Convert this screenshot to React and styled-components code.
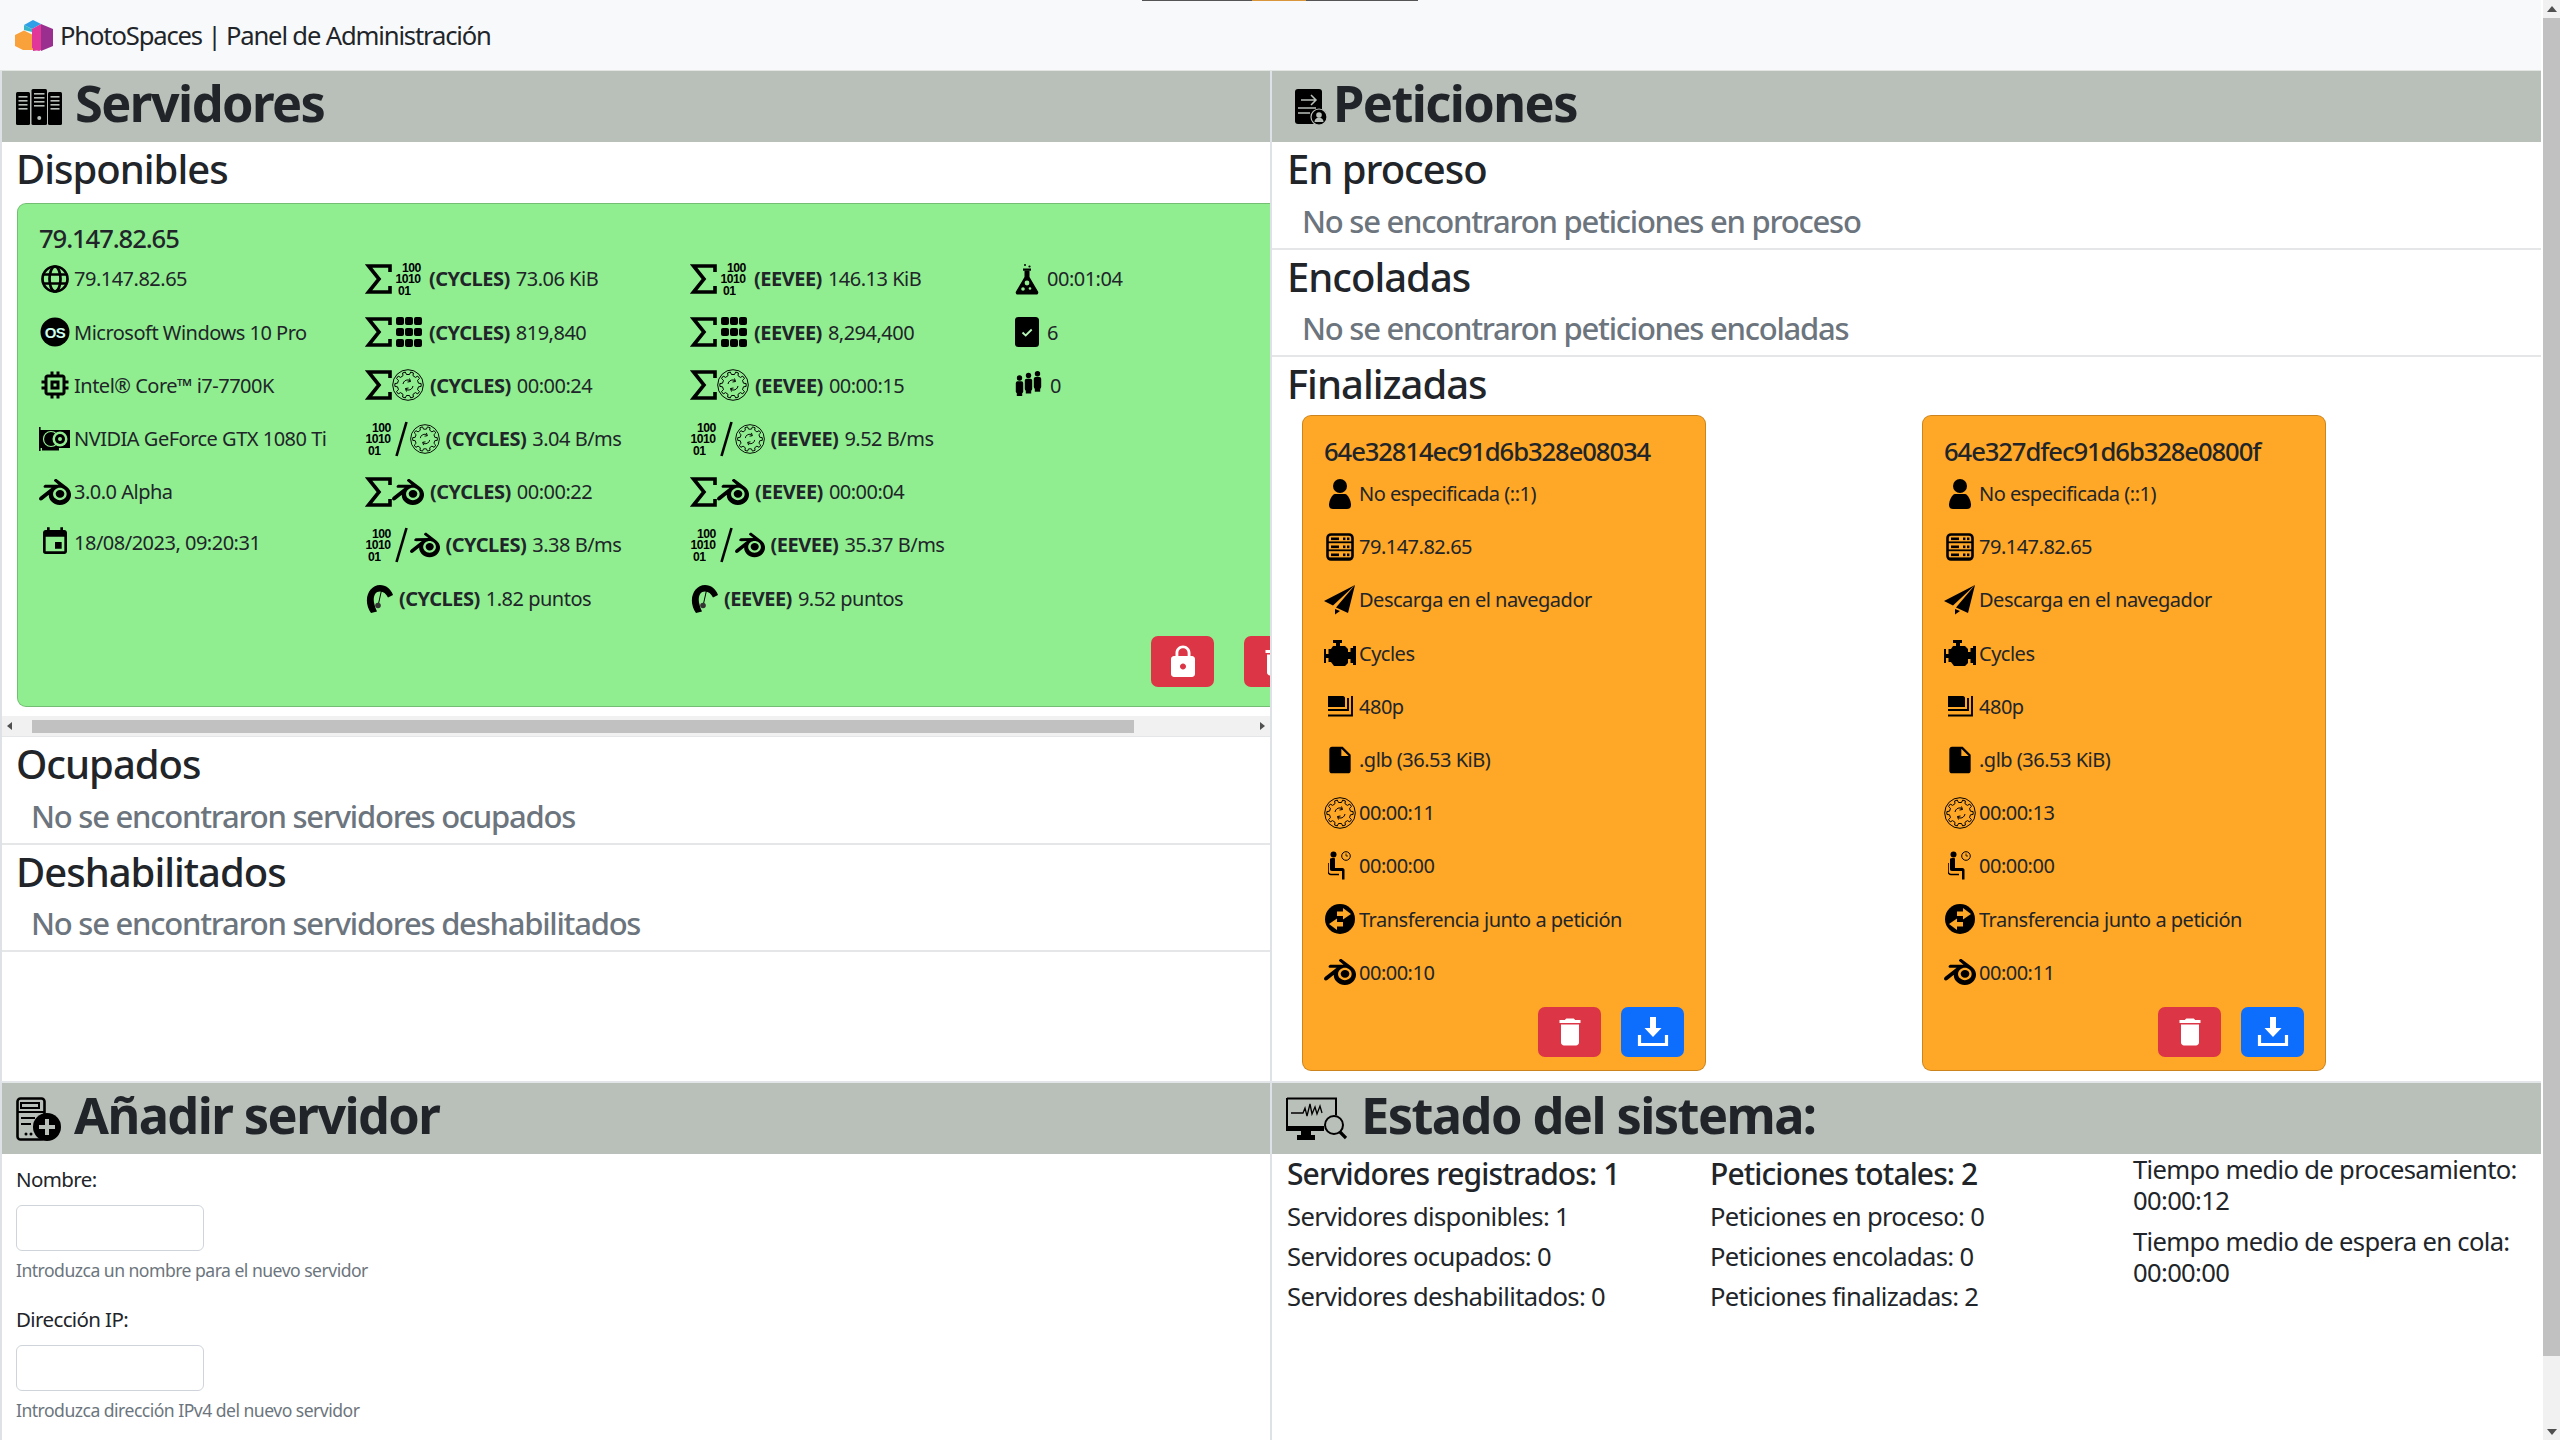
import React from "react";
import styled, { createGlobalStyle } from "styled-components";
import { SiBlender } from "react-icons/si";
import { MdMemory, MdEvent, MdInsertDriveFile, MdDelete, MdLock } from "react-icons/md";

const Global = createGlobalStyle`
  html, body { margin: 0; padding: 0; background: #fff; overflow: hidden; }
  * { box-sizing: border-box; }
  body { font-family: "Noto Sans", "Open Sans", sans-serif; color: #212529; }
`;

const Page = styled.div`display: flex; width: 2560px; height: 1440px; overflow: hidden; position: relative;`;
const Main = styled.div`width: 2541px; display: flex; flex-direction: column; flex: none;`;
const Navbar = styled.header`height: 70px; flex: none; background: #f8f9fa; display: flex; align-items: center; padding-left: 15px; gap: 6px; font-size: 25.6px; letter-spacing: -0.045em;`;
const TopMark = styled.div`position: absolute; top: 0; left: 1142px; width: 276px; height: 1px; background: #555; &::after { content: ""; display: block; margin-left: 110px; width: 54px; height: 1px; background: #d9963a; }`;
const Grid = styled.div`display: grid; grid-template-columns: 1270px 1271px; grid-template-rows: 1010px 1fr; flex: 1; min-height: 0; border-top: 1px solid #e3e5e3;`;
const Cell = styled.section`min-width: 0; display: flex; flex-direction: column; border-left: 2px solid #dee2e6; ${p => p.$row2 && "border-top: 2px solid #e3e6e8;"}`;
const Band = styled.div`height: 71px; flex: none; background: #b9bfb9; display: flex; align-items: center; gap: ${p => p.$gap ?? 13}px; padding-left: ${p => p.$pad ?? 14}px;`;
const BandTitle = styled.h1`margin: 0; font-size: 50.5px; font-weight: 700; line-height: 1.2; letter-spacing: -0.031em; padding-bottom: 7px;`;
const SubTitle = styled.h3`margin: 0; height: ${p => p.$h ?? 56}px; flex: none; display: flex; align-items: center; padding: 0 0 2px ${p => p.$right ? 15 : 14}px; font-size: 40px; font-weight: 500; letter-spacing: -0.025em; line-height: 1.2;`;
const Empty = styled.p`margin: 0; height: 52px; flex: none; display: flex; align-items: center; padding: 0 0 4px ${p => p.$right ? 30 : 29}px; font-size: 31px; font-weight: 500; color: #6c757d; letter-spacing: -0.04em; border-bottom: 2px solid #e4e6e8;`;

const CardClip = styled.div`overflow: hidden; flex: none; padding: 5px 0 0 15px; height: 518px;`;
const ServerCard = styled.article`width: 1312px; height: 504px; background: #90ee90; border: 1px solid rgba(0,0,0,.2); border-radius: 9px; padding: 20px 0 0 21px; display: flex; flex-direction: column;`;
const CardTitle = styled.h5`margin: 0; height: ${p => p.$h ?? 28.4}px; flex: none; display: flex; align-items: center; font-size: 25.6px; font-weight: 500; letter-spacing: -0.042em;`;
const Columns = styled.div`display: grid; grid-template-columns: 326px 325px 325px 1fr; height: 372.4px; flex: none;`;
const Column = styled.div`display: flex; flex-direction: column;`;
const Row = styled.div`height: ${p => p.$h ?? 53.2}px; flex: none; display: flex; align-items: center; gap: 3px; font-size: 20px; letter-spacing: -0.025em; white-space: nowrap; & b { font-weight: 700; margin-right: 0.3em; }`;
const IconBox = styled.span`flex: none; display: inline-flex; align-items: center; justify-content: center; gap: ${p => p.$gap ?? 2}px; margin-right: ${p => p.$mr ?? 0}px; min-width: ${p => p.$w ?? 32}px; color: #000;`;
const Actions = styled.div`display: flex; justify-content: flex-end; gap: ${p => p.$gap ?? 30}px; padding-right: ${p => p.$pr ?? 21}px; margin-top: ${p => p.$mt ?? 10}px;`;
const ActionBtn = styled.button`width: 63px; height: ${p => p.$h ?? 51}px; border: 0; border-radius: 7px; padding: 0; background: ${p => p.$blue ? "#0d6efd" : "#dc3545"}; color: #fff; display: flex; align-items: center; justify-content: center; font-size: 36px;`;

const HBar = styled.div`height: 21px; flex: none; background: #f1f1f1; display: flex; align-items: center; border-bottom: 1px solid #e4e6e8;`;
const HArrow = styled.span`width: 16px; flex: none; display: flex; justify-content: center; &::before { content: ""; border: 4px solid transparent; ${p => p.$right ? "border-left: 5px solid #505050; margin-left: 5px;" : "border-right: 5px solid #505050; margin-right: 5px;"} }`;
const HTrack = styled.div`flex: 1; height: 13px; padding-left: 13.5px;`;
const HThumb = styled.div`height: 13px; background: #c1c1c1;`;

const CardsRow = styled.div`display: grid; grid-template-columns: repeat(2, 620px); padding: 1.5px 0 0 30px;`;
const ReqCard = styled.article`width: 404px; height: 656px; background: #ffa726; border: 1px solid rgba(0,0,0,.2); border-radius: 9px; padding: 21px 0 0 21px; display: flex; flex-direction: column;`;
const ReqRows = styled.div`height: 532px; flex: none; display: flex; flex-direction: column;`;

const Form = styled.div`display: flex; flex-direction: column; padding: 10.5px 0 0 14px;`;
const Label = styled.label`height: 28px; display: flex; align-items: center; font-size: 20.5px; letter-spacing: -0.03em;`;
const Input = styled.input`width: 188px; height: 46px; margin-top: 12px; border: 1px solid #ced4da; border-radius: 6px; background: #fff; display: block;`;
const Help = styled.small`display: flex; align-items: center; height: 24px; margin-top: 7px; font-size: 17.6px; color: #6c757d; letter-spacing: -0.03em;`;
const Field = styled.div`height: 140px; display: flex; flex-direction: column;`;

const Stats = styled.div`display: grid; grid-template-columns: 423px 423px 1fr; padding: 1px 0 0 15px;`;
const StatCol = styled.div`display: flex; flex-direction: column;`;
const StatHead = styled.div`height: 36px; display: flex; align-items: center; font-size: 30px; font-weight: 500; letter-spacing: -0.03em; margin-bottom: 5px; white-space: nowrap;`;
const StatLine = styled.div`height: 40.3px; display: flex; align-items: center; font-size: 25.6px; letter-spacing: -0.026em; white-space: nowrap;`;
const StatBlock = styled.div`font-size: 25.6px; line-height: 30.5px; letter-spacing: -0.026em; margin: ${p => p.$mt ?? 0}px 0 0; white-space: nowrap;`;

const VBar = styled.aside`width: 17px; margin-left: 2px; flex: none; background: #f1f1f1; display: flex; flex-direction: column; align-items: center;`;
const VArrow = styled.span`height: 18px; flex: none; display: flex; align-items: center; &::before { content: ""; border: 5px solid transparent; ${p => p.$down ? "border-top: 6px solid #505050; margin-top: 6px;" : "border-bottom: 6px solid #505050; margin-bottom: 6px;"} }`;
const VThumb = styled.div`width: 100%; height: 1338px; background: #c1c1c1; flex: none;`;
const VSpace = styled.div`flex: 1;`;

const Glyph = styled.svg`flex: none; display: block; color: #000;`;
const I = ({ w = 32, h = 32, vb, children }) => <Glyph width={w} height={h} viewBox={vb || `0 0 ${w} ${h}`}>{children}</Glyph>;

const gear = (() => {
  const n = 10, c = 16, out = 13.2, inn = 10.6; let d = "";
  for (let i = 0; i < n; i++) {
    const a = (i / n) * Math.PI * 2, s = Math.PI / n / 2;
    const pts = [[inn, a - s * 1.1], [out, a - s * .7], [out, a + s * .7], [inn, a + s * 1.1]];
    pts.forEach(([r, t], k) => { d += `${i === 0 && k === 0 ? "M" : "L"}${(c + r * Math.cos(t)).toFixed(2)} ${(c + r * Math.sin(t)).toFixed(2)}`; });
  }
  return d + "Z";
})();

const Globe = () => <I><g fill="none" stroke="#000" strokeWidth="2.7"><circle cx="16" cy="16" r="12.5" /><ellipse cx="16" cy="16" rx="5.5" ry="12.5" /><path d="M5 11.5h22M5 20.5h22" /></g></I>;
const Os = () => <I><circle cx="16" cy="16" r="14.5" fill="#000" /><text x="16" y="21.5" textAnchor="middle" fontFamily="Liberation Sans" fontWeight="700" fontSize="15" fill="#cfe">OS</text></I>;
const Gpu = () => <I w={32} h={28}><rect x="1" y="5" width="30" height="18" fill="#000" /><rect x="0" y="2" width="1.6" height="24" fill="#000" /><rect x="3" y="23" width="17" height="2.5" fill="#000" /><circle cx="12" cy="14" r="7.5" fill="none" stroke="#90ee90" strokeWidth="1.2" /><circle cx="21" cy="14" r="7.5" fill="#90ee90" /><circle cx="21" cy="14" r="5" fill="#000" /><circle cx="21" cy="14" r="2" fill="#90ee90" /></I>;
const Blend = ({ s = 32 }) => <SiBlender size={s} color="#000" style={{ flex: "none" }} />;
const Sigma = () => <I w={27} h={32}><path d="M25 9V3H3.5l10.5 13L3.5 29H25v-6" fill="none" stroke="#000" strokeWidth="3.6" /></I>;
const Binary = () => <I w={28} h={34}><g fontFamily="Liberation Sans" fontWeight="700" fontSize="12.2" fill="#000"><text x="7" y="10">100</text><text x="0.5" y="21">1010</text><text x="3" y="32.5">01</text></g></I>;
const Slash = () => <I w={13} h={36}><path d="M11.5 1 1.5 35" stroke="#000" strokeWidth="2.6" /></I>;
const Cells = () => <I w={28} h={32}><g fill="#000">{[5, 16, 27].flatMap(y => [5, 14, 23].map(x => <rect key={`${x}${y}`} x={x - 4} y={y - 4} width="8" height="8" rx="2" />))}</g></I>;
const GearRing = ({ w = 32 }) => <I w={w} h={w} vb="0 0 32 32"><circle cx="16" cy="16" r="15.3" fill="none" stroke="#000" strokeWidth="1" /><path d={gear} fill="none" stroke="#000" strokeWidth="1" /><path d="M11 15c.5-3 3-4.500 6-4l1 1.500M21 17c-.5 3-3 4.500-6 4l-1-1.500M17.500 9.500l1 3-3 .5M14.500 22.500l-1-3 3-.5" fill="none" stroke="#000" strokeWidth="1" /></I>;
const Meter = () => <I w={28} h={30}><path d="M6 30C-3 17 4 2 15 2c6 0 11 4 13 10l-5 2.500c-2-4-4.500-6-8-6-5 0-7 5-6 11 .5 3 1.500 6 3 9Z" fill="#000" /><path d="M13 23 17 5" stroke="#000" strokeWidth="1" /><circle cx="13" cy="22.500" r="2.800" fill="#333" /></I>;
const Flask = () => <I w={24} h={32}><g fill="#000"><circle cx="10" cy="2" r="1" /><circle cx="14.500" cy="3.500" r="1.100" /><rect x="8" y="5.500" width="8" height="2.200" /><path d="M9.500 7.500h5V14l8.500 14.500a2 2 0 0 1-2 3H3a2 2 0 0 1-2-3L9.500 14Z" /></g><circle cx="12" cy="20" r="2.400" fill="#90ee90" /><circle cx="8" cy="26" r="1.800" fill="#90ee90" /><circle cx="15" cy="25.500" r="1.300" fill="#90ee90" /></I>;
const Check = () => <I w={24} h={30}><rect width="24" height="30" rx="3.500" fill="#000" /><path d="M7.500 15.500l3.200 3 6-6" fill="none" stroke="#b6f5b6" strokeWidth="1.800" /></I>;
const Person3 = ({ x, y }) => <g fill="#000"><circle cx={x} cy={y} r="2.700" /><rect x={x - 3.700} y={y + 3.200} width="7.400" height="12" rx="1.800" /><rect x={x - 2.700} y={y + 13} width="5.400" height="5" /></g>;
const People = () => <I w={27} h={28}><Person3 x={4.500} y={7} /><Person3 x={13.500} y={4.500} /><Person3 x={22.500} y={2.700} /></I>;
const User = () => <I w={32} h={32}><circle cx="16" cy="8" r="7" fill="#000" /><path d="M11 16h10c3 0 6 7 6 11 0 3-2 4-4 4H9c-2 0-4-1-4-4 0-4 3-11 6-11Z" fill="#000" /></I>;
const Server = () => <I w={28} h={28}><rect x="1.500" y="1.500" width="25" height="25" rx="3.500" fill="none" stroke="#000" strokeWidth="2.600" />{[3, 11, 19].map(y => <g key={y}><path d={`M2 ${y + 6.300}h24`} stroke="#000" strokeWidth="1.800" /><rect x="5" y={y + 1.500} width="8" height="2.600" fill="#000" /><rect x="17" y={y + 1.500} width="2.400" height="2.600" fill="#000" /><rect x="21" y={y + 1.500} width="2.400" height="2.600" fill="#000" /></g>)}</I>;
const Plane = () => <I w={32} h={30}><path d="M31 0 0 16l9 4.500L31 0ZM31 0 12 22.500l12 5.500L31 0Z" fill="#000" /><path d="M11 24v5.500l5-3.500Z" fill="#000" /></I>;
const Engine = () => <I w={32} h={28}><path d="M9 1h9v3h-2v3h5l3 3v3h2.500V9H29v-2h3v19h-3v-2h-2.500v-4H24v4l-3 3H10l-3-4H4.500v-4H2v5H0V10h2v5h2.500v-5H7l2-3h3V4H9Z" fill="#000" /></I>;
const Layers = () => <I w={26} h={22}><path d="M1 1h15c1 0 2 1 2 2v9H1Z" fill="#000" /><path d="M1 15h20V3M1 20.500h24V1" fill="none" stroke="#000" strokeWidth="1.900" /></I>;
const Seat = () => <I w={24} h={30}><circle cx="5.500" cy="3.500" r="3" fill="#000" /><path d="M2 8c0-1 5-1.500 5-.5V17h7.500c1.200 0 2 1 2 2v9.500h-2.500V20H4c-1.500 0-2-1-2-2Z" fill="#000" /><path d="M0 12v8c0 2 1.500 3.500 3 3.500h8" fill="none" stroke="#000" strokeWidth="1.600" /><circle cx="18" cy="5" r="4.300" fill="none" stroke="#000" strokeWidth="1" /><path d="M18 2.500V5h2" fill="none" stroke="#000" strokeWidth=".8" /></I>;
const Transfer = () => <I w={32} h={32}><circle cx="16" cy="16" r="15" fill="#000" /><path d="M13 8.500h6V5l8 6-8 5.500V13h-6ZM19 23.500h-6V27l-8-6 8-5.500V19h6Z" fill="#ffa726" /></I>;
const Logo = () => <Glyph width="39" height="31" viewBox="0 0 39 31"><path d="M0 15l9-4.500 9 4.500v15H8L0 26Z" fill="#f9a13a" /><path d="M9 5l9-5 8 4-9 5Z" fill="#2f9fe8" /><path d="M9 5l8 4v3l-8-2Z" fill="#37b6c9" /><path d="M17 9l9-5v26l-2 1-7-3Z" fill="#e1369a" /><path d="M26 4l12 5v17l-12 5Z" fill="#9b2f8f" /><path d="M18 15l8-3v18l-8 1Z" fill="#e1369a" /></Glyph>;
const Towers = () => <I w={46} h={36}>{[0, 15.500, 32].map((x, k) => { const w = k === 1 ? 15.500 : 14; const top = k === 1 ? 0 : 3; return <g key={x}><rect x={x} y={top} width={w} height={36 - top} rx="1.500" fill="#000" />{[4, 8, 12, 16].map(y => <rect key={y} x={x + 2.500} y={top + y} width={w - 5} height="1.600" fill="#b9bfb9" />)}{k === 1 && <circle cx={x + w / 2} cy="29" r="2" fill="#b9bfb9" />}</g>; })}</I>;
const ReqDoc = () => <I w={32} h={36}><rect x="0" y="0" width="27" height="35" rx="3" fill="#000" /><path d="M6 11h15M16 6l5 5-5 5M3 19h18M3 24h12" fill="none" stroke="#b9bfb9" strokeWidth="1.500" /><circle cx="24" cy="28" r="8" fill="#000" stroke="#b9bfb9" strokeWidth="1.200" /><circle cx="24" cy="26" r="2.800" fill="#b9bfb9" /><path d="M19.500 33c0-6 9-6 9 0Z" fill="#b9bfb9" /></I>;
const AddServer = () => <I w={45} h={44}><rect x="1.500" y="1.500" width="27" height="41" rx="3" fill="none" stroke="#000" strokeWidth="2.600" /><path d="M5 6h18v5H5Z" fill="none" stroke="#000" strokeWidth="2" /><path d="M2 15h26M5 21h14M5 27h10" stroke="#000" strokeWidth="2.200" /><circle cx="10" cy="37" r="1.500" fill="#000" /><circle cx="15" cy="37" r="1.500" fill="#000" /><circle cx="31" cy="30" r="14" fill="#000" /><path d="M31 22v16M23 30h16" stroke="#b9bfb9" strokeWidth="4" /></I>;
const Monitor = () => <I w={61} h={43}><path d="M1 1.500h49v17" fill="none" stroke="#000" strokeWidth="2" /><path d="M1 1v31h36" fill="none" stroke="#000" strokeWidth="2" /><rect x="0" y="29" width="38" height="5" fill="#000" /><rect x="15" y="34" width="10" height="4" fill="#000" /><rect x="11" y="38" width="18" height="5" fill="#000" /><path d="M5 16h12l2-5 2 8 3-12 2 10 3-7 2 7 3-8 2 7" fill="none" stroke="#000" strokeWidth="1.300" /><circle cx="48" cy="28" r="9" fill="none" stroke="#000" strokeWidth="2" /><path d="M54 35l6 6" stroke="#000" strokeWidth="3.200" /></I>;
const Download = () => <Glyph width="32" height="32" viewBox="0 0 32 32"><path d="M13 1h6v11h5.500L16 21 7.500 12H13Z" fill="#fff" /><path d="M2.500 19v9.500h27V19" fill="none" stroke="#fff" strokeWidth="3.200" /></Glyph>;

const ic = {
  sb: () => <IconBox $gap={3} $mr={3}><Sigma /><Binary /></IconBox>,
  sc: () => <IconBox $gap={3} $mr={3}><Sigma /><Cells /></IconBox>,
  sg: () => <IconBox $gap={0} $mr={3}><Sigma /><GearRing /></IconBox>,
  bg: () => <IconBox $gap={2} $mr={2.5}><Binary /><Slash /><GearRing w={30} /></IconBox>,
  sr: () => <IconBox $gap={0} $mr={3}><Sigma /><Blend /></IconBox>,
  br: () => <IconBox $gap={2} $mr={2.5}><Binary /><Slash /><Blend s={30} /></IconBox>,
  me: () => <IconBox $w={28} $mr={3}><Meter /></IconBox>,
};

const engineRows = (e, v) => [
  ["sb", `(${e})`, v[0]], ["sc", `(${e})`, v[1]], ["sg", `(${e})`, v[2]], ["bg", `(${e})`, v[3]],
  ["sr", `(${e})`, v[4]], ["br", `(${e})`, v[5]], ["me", `(${e})`, v[6]],
];

const EngineColumn = ({ engine, values }) => (
  <Column>
    {engineRows(engine, values).map(([k, b, t]) => { const C = ic[k]; return <Row key={k}><C /><span><b>{b}</b>{t}</span></Row>; })}
  </Column>
);

const Req = ({ id, gen, proc }) => (
  <ReqCard>
    <CardTitle $h={30.5}>{id}</CardTitle>
    <ReqRows>
      <Row><IconBox><User /></IconBox>No especificada (::1)</Row>
      <Row><IconBox><Server /></IconBox>79.147.82.65</Row>
      <Row><IconBox><Plane /></IconBox>Descarga en el navegador</Row>
      <Row><IconBox><Engine /></IconBox>Cycles</Row>
      <Row><IconBox><Layers /></IconBox>480p</Row>
      <Row><IconBox><MdInsertDriveFile size={32} /></IconBox>.glb (36.53 KiB)</Row>
      <Row><IconBox><GearRing /></IconBox>{proc}</Row>
      <Row><IconBox><Seat /></IconBox>00:00:00</Row>
      <Row><IconBox><Transfer /></IconBox>Transferencia junto a petición</Row>
      <Row><IconBox><Blend /></IconBox>{gen}</Row>
    </ReqRows>
    <Actions $gap={20} $mt={7.7} $pr={21}>
      <ActionBtn $h={50}><MdDelete /></ActionBtn>
      <ActionBtn $h={50} $blue><Download /></ActionBtn>
    </Actions>
  </ReqCard>
);

export default function App() {
  return (
    <Page>
      <Global />
      <TopMark />
      <Main>
        <Navbar><Logo /><span>PhotoSpaces | Panel de Administración</span></Navbar>
        <Grid>
          <Cell>
            <Band><Towers /><BandTitle>Servidores</BandTitle></Band>
            <SubTitle>Disponibles</SubTitle>
            <CardClip>
              <ServerCard>
                <CardTitle>79.147.82.65</CardTitle>
                <Columns>
                  <Column>
                    <Row><IconBox><Globe /></IconBox>79.147.82.65</Row>
                    <Row><IconBox><Os /></IconBox>Microsoft Windows 10 Pro</Row>
                    <Row><IconBox><MdMemory size={36} style={{ margin: "0 -2px" }} /></IconBox>Intel® Core™ i7-7700K</Row>
                    <Row><IconBox><Gpu /></IconBox>NVIDIA GeForce GTX 1080 Ti</Row>
                    <Row><IconBox><Blend /></IconBox>3.0.0 Alpha</Row>
                    <Row $h={48}><IconBox><MdEvent size={32} /></IconBox>18/08/2023, 09:20:31</Row>
                  </Column>
                  <EngineColumn engine="CYCLES" values={["73.06 KiB", "819,840", "00:00:24", "3.04 B/ms", "00:00:22", "3.38 B/ms", "1.82 puntos"]} />
                  <EngineColumn engine="EEVEE" values={["146.13 KiB", "8,294,400", "00:00:15", "9.52 B/ms", "00:00:04", "35.37 B/ms", "9.52 puntos"]} />
                  <Column>
                    <Row><IconBox $w={24} $mr={5}><Flask /></IconBox>00:01:04</Row>
                    <Row><IconBox $w={24} $mr={5}><Check /></IconBox>6</Row>
                    <Row><IconBox $w={24} $mr={5}><People /></IconBox>0</Row>
                  </Column>
                </Columns>
                <Actions $mt={11.6} $pr={21}>
                  <ActionBtn><MdLock /></ActionBtn>
                  <ActionBtn><MdDelete /></ActionBtn>
                </Actions>
              </ServerCard>
            </CardClip>
            <HBar>
              <HArrow />
              <HTrack><HThumb style={{ width: 1102 }} /></HTrack>
              <HArrow $right />
            </HBar>
            <SubTitle>Ocupados</SubTitle>
            <Empty>No se encontraron servidores ocupados</Empty>
            <SubTitle $h={55}>Deshabilitados</SubTitle>
            <Empty>No se encontraron servidores deshabilitados</Empty>
          </Cell>
          <Cell>
            <Band $pad={23} $gap={6}><ReqDoc /><BandTitle>Peticiones</BandTitle></Band>
            <SubTitle $right>En proceso</SubTitle>
            <Empty $right>No se encontraron peticiones en proceso</Empty>
            <SubTitle $right $h={55}>Encoladas</SubTitle>
            <Empty $right>No se encontraron peticiones encoladas</Empty>
            <SubTitle $right>Finalizadas</SubTitle>
            <CardsRow>
              <Req id="64e32814ec91d6b328e08034" proc="00:00:11" gen="00:00:10" />
              <Req id="64e327dfec91d6b328e0800f" proc="00:00:13" gen="00:00:11" />
            </CardsRow>
          </Cell>
          <Cell $row2>
            <Band><AddServer /><BandTitle>Añadir servidor</BandTitle></Band>
            <Form>
              <Field>
                <Label>Nombre:</Label>
                <Input />
                <Help>Introduzca un nombre para el nuevo servidor</Help>
              </Field>
              <Field>
                <Label>Dirección IP:</Label>
                <Input />
                <Help>Introduzca dirección IPv4 del nuevo servidor</Help>
              </Field>
            </Form>
          </Cell>
          <Cell $row2>
            <Band $pad={14} $gap={14}><Monitor /><BandTitle>Estado del sistema:</BandTitle></Band>
            <Stats>
              <StatCol>
                <StatHead>Servidores registrados: 1</StatHead>
                <StatLine>Servidores disponibles: 1</StatLine>
                <StatLine>Servidores ocupados: 0</StatLine>
                <StatLine>Servidores deshabilitados: 0</StatLine>
              </StatCol>
              <StatCol>
                <StatHead>Peticiones totales: 2</StatHead>
                <StatLine>Peticiones en proceso: 0</StatLine>
                <StatLine>Peticiones encoladas: 0</StatLine>
                <StatLine>Peticiones finalizadas: 2</StatLine>
              </StatCol>
              <StatCol>
                <StatBlock>Tiempo medio de procesamiento:<br />00:00:12</StatBlock>
                <StatBlock $mt={11}>Tiempo medio de espera en cola:<br />00:00:00</StatBlock>
              </StatCol>
            </Stats>
          </Cell>
        </Grid>
      </Main>
      <VBar>
        <VArrow />
        <VThumb />
        <VSpace />
        <VArrow $down />
      </VBar>
    </Page>
  );
}
